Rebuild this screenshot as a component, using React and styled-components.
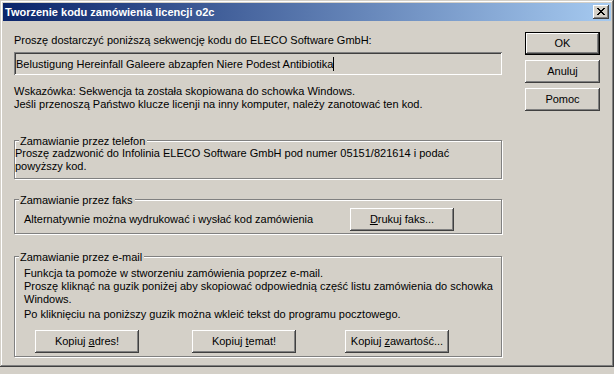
import React from "react";
import styled, { createGlobalStyle } from "styled-components";

const Global = createGlobalStyle`
  html, body { margin: 0; padding: 0; background: #d4d0c8; }
  body { font-family: "Liberation Sans", Arial, sans-serif; font-size: 11px; color: #000; }
`;

const Window = styled.div`
  box-sizing: border-box;
  width: 614px;
  height: 367px;
  padding: 3px;
  background: #d4d0c8;
  box-shadow: inset -1px -1px #404040, inset 1px 1px #d4d0c8,
    inset -2px -2px #808080, inset 2px 2px #ffffff;
  display: flex;
  flex-direction: column;
`;

const TitleBar = styled.div`
  flex: none;
  height: 18px;
  display: flex;
  align-items: center;
  justify-content: space-between;
  padding: 0 2px 0 2px;
  background: linear-gradient(to right, #0a246a, #a6caf0);
`;

const TitleText = styled.span`
  color: #fff;
  font-weight: bold;
  font-size: 11px;
  white-space: nowrap;
`;

const CloseBox = styled.div`
  box-sizing: border-box;
  width: 16px;
  height: 14px;
  background: #d4d0c8;
  box-shadow: inset -1px -1px #404040, inset 1px 1px #fff,
    inset -2px -2px #808080, inset 2px 2px #d4d0c8;
  display: flex;
  align-items: center;
  justify-content: center;
  svg { display: block; margin: 0 1px 1px 0; }
`;

const Body = styled.div`
  flex: 1;
  display: flex;
  gap: 23px;
  padding: 0 11px;
`;

const Main = styled.div`
  width: 488px;
  padding-top: 13px;
  display: flex;
  flex-direction: column;
`;

const Side = styled.div`
  width: 75px;
  padding-top: 11px;
  display: flex;
  flex-direction: column;
  gap: 5px;
`;

const Line = styled.div`
  line-height: 13px;
  white-space: nowrap;
  margin-top: ${(p) => p.$mt || 0}px;
`;

const Field = styled.div`
  box-sizing: border-box;
  height: 23px;
  margin-top: 5px;
  display: flex;
  align-items: center;
  padding-left: 0;
  background: #d4d0c8;
  box-shadow: inset 1px 1px #808080, inset -1px -1px #fff,
    inset 2px 2px #404040, inset -2px -2px #d4d0c8;
  padding-left: 2px;
  white-space: nowrap;
`;

const Caret = styled.span`
  display: inline-block;
  width: 1px;
  height: 14px;
  background: #000;
`;

const Hint = styled.div`
  margin-top: 10px;
  line-height: 13px;
`;

const Group = styled.div`
  position: relative;
  box-sizing: border-box;
  border: 1px solid #808080;
  box-shadow: inset 1px 1px #fff, 1px 1px #fff;
  margin-top: ${(p) => p.$mt}px;
  padding: ${(p) => p.$pad};
`;

const Legend = styled.span`
  position: absolute;
  top: -6px;
  left: 4px;
  padding: 0 2px 0 1px;
  line-height: 13px;
  background: #d4d0c8;
  white-space: nowrap;
`;

const FaxRow = styled.div`
  display: flex;
  align-items: center;
  justify-content: space-between;
`;

const ButtonRow = styled.div`
  display: flex;
  margin-top: 9px;
  padding-left: 11px;
`;

const Button = styled.button`
  box-sizing: border-box;
  width: ${(p) => p.$w || 75}px;
  height: 23px;
  margin: 0 0 0 ${(p) => p.$ml || 0}px;
  padding: 0;
  flex: none;
  border: ${(p) => (p.$default ? "1px solid #000" : "none")};
  background: #d4d0c8;
  color: #000;
  font-family: "Liberation Sans", Arial, sans-serif;
  font-size: 11px;
  line-height: 13px;
  box-shadow: inset -1px -1px #404040, inset 1px 1px #fff,
    inset -2px -2px #808080, inset 2px 2px #d4d0c8;
  u { text-underline-offset: 1px; }
`;

const CloseGlyph = () => (
  <svg width="8" height="7" viewBox="0 0 8 7" shapeRendering="crispEdges">
    <path
      fill="#000"
      d="M0 0h2v1H0zM6 0h2v1H6zM1 1h2v1H1zM5 1h2v1H5zM2 2h4v1H2zM3 3h2v1H3zM2 4h4v1H2zM1 5h2v1H1zM5 5h2v1H5zM0 6h2v1H0zM6 6h2v1H6z"
    />
  </svg>
);

export default function App() {
  return (
    <>
      <Global />
      <Window>
        <TitleBar>
          <TitleText>Tworzenie kodu zamówienia licencji o2c</TitleText>
          <CloseBox>
            <CloseGlyph />
          </CloseBox>
        </TitleBar>
        <Body>
          <Main>
            <Line>Proszę dostarczyć poniższą sekwencję kodu do ELECO Software GmbH:</Line>
            <Field>
              Belustigung Hereinfall Galeere abzapfen Niere Podest Antibiotika
              <Caret />
            </Field>
            <Hint>
              <Line>Wskazówka: Sekwencja ta została skopiowana do schowka Windows.</Line>
              <Line>Jeśli przenoszą Państwo klucze licenji na inny komputer, należy zanotować ten kod.</Line>
            </Hint>

            <Group $mt={29} $pad="6px 0 5px 0">
              <Legend>Zamawianie przez telefon</Legend>
              <Line>Proszę zadzwonić do Infolinia ELECO Software GmbH pod numer 05151/821614 i podać</Line>
              <Line>powyższy kod.</Line>
            </Group>

            <Group $mt={20} $pad="8px 47px 2px 9px">
              <Legend>Zamawianie przez faks</Legend>
              <FaxRow>
                <Line>Alternatywnie można wydrukować i wysłać kod zamówienia</Line>
                <Button $w={104}>
                  <u>D</u>rukuj faks...
                </Button>
              </FaxRow>
            </Group>

            <Group $mt={22} $pad="10px 0 3px 9px">
              <Legend>Zamawianie przez e-mail</Legend>
              <Line>Funkcja ta pomoże w stworzeniu zamówienia poprzez e-mail.</Line>
              <Line>Proszę kliknąć na guzik poniżej aby skopiować odpowiednią część listu zamówienia do schowka</Line>
              <Line>Windows.</Line>
              <Line $mt={2}>Po kliknięciu na poniższy guzik można wkleić tekst do programu pocztowego.</Line>
              <ButtonRow>
                <Button $w={104}>
                  Kopiuj <u>a</u>dres!
                </Button>
                <Button $w={104} $ml={53}>
                  Kopiuj <u>t</u>emat!
                </Button>
                <Button $w={104} $ml={49}>
                  Kopiuj <u>z</u>awartość...
                </Button>
              </ButtonRow>
            </Group>
          </Main>
          <Side>
            <Button $default>OK</Button>
            <Button>Anuluj</Button>
            <Button>Pomoc</Button>
          </Side>
        </Body>
      </Window>
    </>
  );
}
